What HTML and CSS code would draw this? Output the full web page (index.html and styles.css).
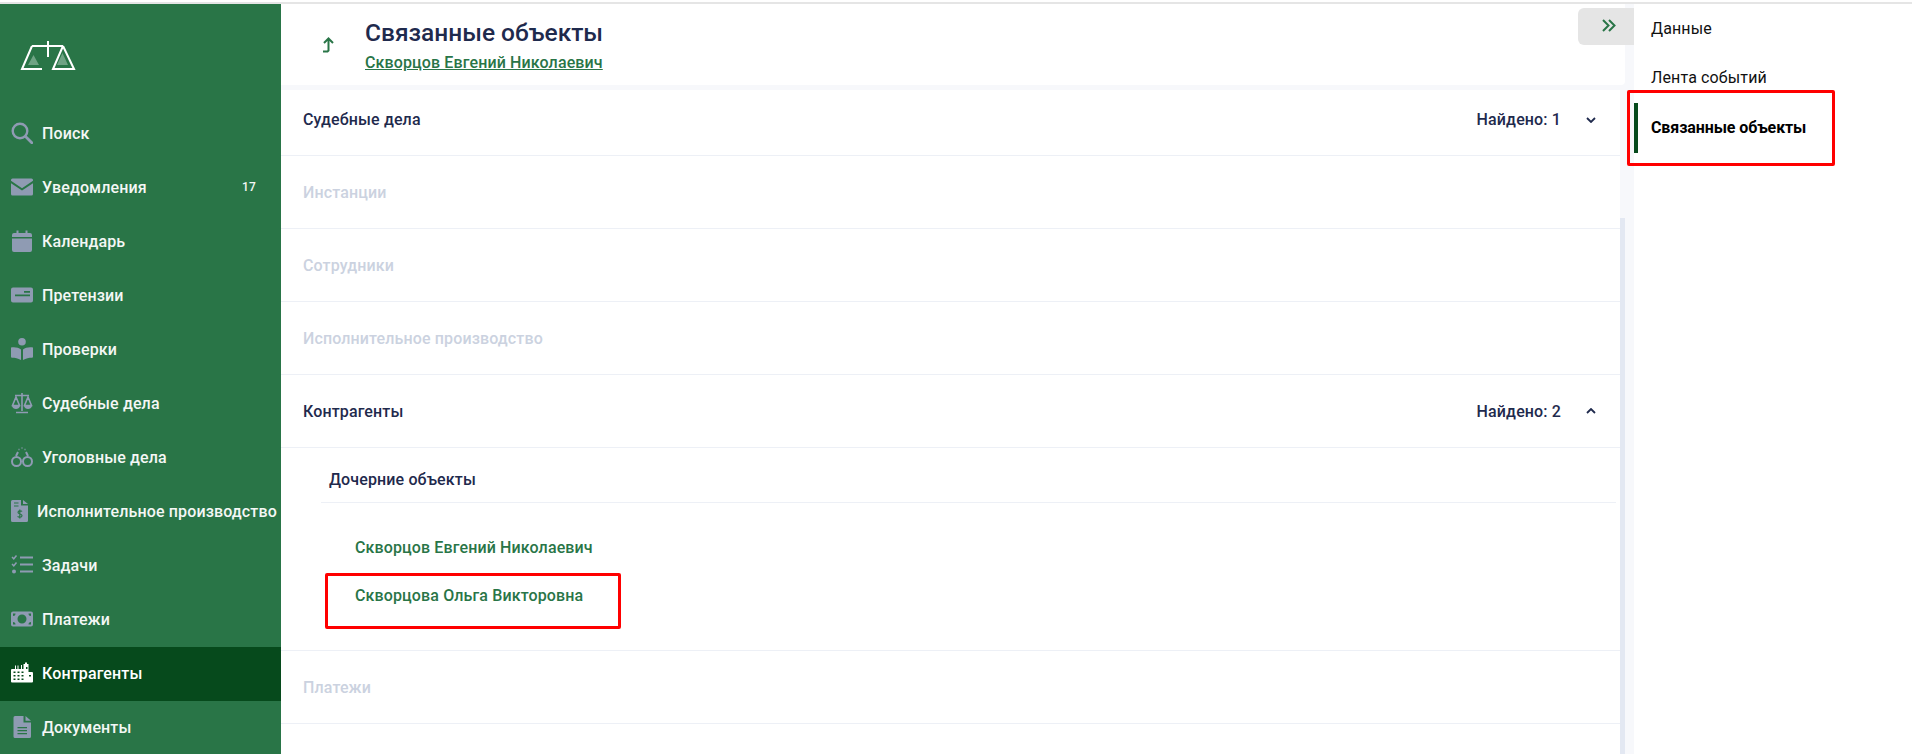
FILE: index.html

```html
<!DOCTYPE html>
<html lang="ru">
<head>
  <meta charset="UTF-8" />
  <title>Связанные объекты</title>
  <link rel="stylesheet" href="styles.css">
</head>
<body>
  <div class="top-line"></div>
  <div class="page">
    <aside class="sidebar">
      <div class="logo">
        <svg width="58" height="32" viewBox="0 0 58 32">
          <path d="M13.500 14 8 24h11zM42.500 12 37 24h11z" fill="#6fa384"/>
          <path d="M28 0v16M12 5h31M22 28H2L12 5M43 5 33 28h21L43 5" fill="none" stroke="#fff" stroke-width="2"/>
        </svg>
      </div>
      <nav>
        <a class="nav-item">
          <svg class="nav-icon" viewBox="0 0 22 22"><circle cx="9" cy="9" r="7.3" fill="none" stroke-width="2.4"/><path d="m14.5 14.5 6.3 6.3" stroke-width="2.8" fill="none" stroke-linecap="round"/></svg>
          <span>Поиск</span>
        </a>
        <a class="nav-item">
          <svg class="nav-icon" viewBox="0 0 22 22"><path d="M1.5 2.5h19A1.5 1.5 0 0 1 22 4v.8l-11 7.4L0 4.800V4a1.500 1.500 0 0 1 1.500-1.500z" class="fill"/><path d="M0 7.200 11 14.600 22 7.200V18a1.500 1.500 0 0 1-1.500 1.500h-19A1.500 1.500 0 0 1 0 18z" class="fill"/></svg>
          <span>Уведомления</span>
          <b class="badge">17</b>
        </a>
        <a class="nav-item">
          <svg class="nav-icon" viewBox="0 0 22 22"><path d="M1 8.500h20V20a2 2 0 0 1-2 2H3a2 2 0 0 1-2-2zM3 3h2.500V.5h2V3h7V.5h2V3H19a2 2 0 0 1 2 2v2H1V5a2 2 0 0 1 2-2z" class="fill"/></svg>
          <span>Календарь</span>
        </a>
        <a class="nav-item">
          <svg class="nav-icon" viewBox="0 0 22 22"><path fill-rule="evenodd" d="M2 3.500h18a2 2 0 0 1 2 2v11a2 2 0 0 1-2 2H2a2 2 0 0 1-2-2v-11a2 2 0 0 1 2-2zM13 7v1.800h6V7zM4 10.500v1.800h15v-1.800z" class="fill"/></svg>
          <span>Претензии</span>
        </a>
        <a class="nav-item">
          <svg class="nav-icon" viewBox="0 0 22 22"><circle cx="11" cy="3.800" r="3.800" class="fill"/><path d="M0 9.500c4-.6 7.500 0 10 2v10.500c-3-1.800-6-2.300-9-2.300a1 1 0 0 1-1-1zM22 9.500c-4-.6-7.500 0-10 2v10.500c3-1.800 6-2.300 9-2.300a1 1 0 0 0 1-1z" class="fill"/></svg>
          <span>Проверки</span>
        </a>
        <a class="nav-item">
          <svg class="nav-icon" viewBox="0 0 22 22"><path d="M11 1v18M4 3.500h14M5 20.500h12M5 5 1.500 13.500h7zM17 5l-3.500 8.500h7z" fill="none" stroke-width="1.600"/><path d="M1 14c.5 2 2 3 4 3s3.500-1 4-3zM13 14c.5 2 2 3 4 3s3.500-1 4-3z" class="fill"/></svg>
          <span>Судебные дела</span>
        </a>
        <a class="nav-item">
          <svg class="nav-icon" viewBox="0 0 22 22"><circle cx="5.500" cy="15.500" r="4.500" fill="none" stroke-width="2"/><circle cx="16.500" cy="15.500" r="4.500" fill="none" stroke-width="2"/><path d="M5 10 7 6M17 10 15 6" fill="none" stroke-width="2"/><path d="M7.500 3.500h1M10.500 2h1M13.500 3.500h1" fill="none" stroke-width="1.600"/></svg>
          <span>Уголовные дела</span>
        </a>
        <a class="nav-item nav-item-narrow">
          <svg class="nav-icon" viewBox="0 0 17 22"><path fill-rule="evenodd" d="M1.500 0H10v5.500h7V20.500a1.500 1.500 0 0 1-1.500 1.500h-14A1.500 1.500 0 0 1 0 20.500v-19A1.500 1.500 0 0 1 1.500 0zM3 2.500v1h4.500v-1zM3 5.500v1h4.500v-1zM12 0l5 4h-5z" class="fill"/><path d="M11 11.500c-.6-.8-3.800-1.200-4 .8-.2 2 4.200 1.400 4 3.400-.2 2-3.600 1.700-4.400.6M8.800 9.500v9" fill="none" stroke="#297547" stroke-width="1.200"/></svg>
          <span>Исполнительное производство</span>
        </a>
        <a class="nav-item">
          <svg class="nav-icon" viewBox="0 0 22 22"><path d="M1 3l1.800 1.800L5.500 1.500M1 10l1.800 1.800 2.700-3.300" fill="none" stroke-width="1.500"/><circle cx="3" cy="17.500" r="2" class="fill"/><path d="M9 3.500h13M9 10.500h13M9 17.500h13" fill="none" stroke-width="2.200"/></svg>
          <span>Задачи</span>
        </a>
        <a class="nav-item">
          <svg class="nav-icon" viewBox="0 0 22 22"><path fill-rule="evenodd" d="M2 3.500h18a2 2 0 0 1 2 2v11a2 2 0 0 1-2 2H2a2 2 0 0 1-2-2v-11a2 2 0 0 1 2-2zM11 6.500a4.500 4.500 0 1 0 0 9 4.500 4.500 0 0 0 0-9zM2 5.500V8a2.500 2.500 0 0 0 2.500-2.500zM20 5.500H17.500A2.500 2.500 0 0 0 20 8zM2 16.500h2.500A2.500 2.500 0 0 0 2 14zM20 16.500V14a2.500 2.500 0 0 0-2.500 2.500z" class="fill"/></svg>
          <span>Платежи</span>
        </a>
        <a class="nav-item active">
          <svg class="nav-icon" viewBox="0 0 22 22"><path fill-rule="evenodd" d="M1 7h3V3.500h1V7h1.500V3.500h1V7H10V3h1V7h1.500V2h1.500V.5h2V2h1.500v8H21a1 1 0 0 1 1 1v8.500a1 1 0 0 1-1 1H1a1 1 0 0 1-1-1V8a1 1 0 0 1 1-1zM2.500 9.500V11h2V9.500zM6.500 9.500V11h2V9.500zM10.500 9.500V11h2V9.500zM2.500 13V14.500h2V13zM6.500 13V14.500h2V13zM10.500 13V14.500h2V13zM2.500 16.500V18h2v-1.500zM6.500 16.500V18h2v-1.500zM10.500 16.500V18h2v-1.500zM15 5v2h1.500V5zM18 13v1.500h2V13z" class="fill"/></svg>
          <span>Контрагенты</span>
        </a>
        <a class="nav-item">
          <svg class="nav-icon" viewBox="0 0 22 22"><path fill-rule="evenodd" d="M4 0h8.500v6.500H20V20.500A1.500 1.500 0 0 1 18.500 22H4a1.500 1.500 0 0 1-1.500-1.500v-19A1.500 1.500 0 0 1 4 0zM6.500 11v1.300h9.500V11zM6.500 14v1.300h9.500V14zM6.500 17v1.300h9.500V17zM14.500 0 20 4.800H14.500z" class="fill"/></svg>
          <span>Документы</span>
        </a>
      </nav>
    </aside>

    <main class="main">
      <header class="head">
        <svg class="back-icon" width="12" height="16" viewBox="0 0 12 16"><path d="M2 6 6.500 1.500 11 6M6.500 2v11.500L5.500 14.500H1" fill="none" stroke="#297547" stroke-width="2"/></svg>
        <div>
          <h1>Связанные объекты</h1>
          <a class="head-link">Скворцов Евгений Николаевич</a>
        </div>
      </header>
      <button class="toggle">
        <svg width="14" height="13" viewBox="0 0 14 13"><path d="M1 1l5.500 5.500L1 12M7 1l5.500 5.500L7 12" fill="none" stroke="#297547" stroke-width="2"/></svg>
      </button>

      <div class="content">
        <div class="list">
          <div class="row row-first">
            <span>Судебные дела</span>
            <span class="found">Найдено: 1</span>
            <svg class="chevron" width="10" height="6" viewBox="0 0 10 6"><path d="m1 1 4 4 4-4" fill="none" stroke="#1f2a4d" stroke-width="1.800"/></svg>
          </div>
          <div class="row row-empty">Инстанции</div>
          <div class="row row-empty">Сотрудники</div>
          <div class="row row-empty">Исполнительное производство</div>
          <div class="row">
            <span>Контрагенты</span>
            <span class="found">Найдено: 2</span>
            <svg class="chevron" width="10" height="6" viewBox="0 0 10 6"><path d="m1 5 4-4 4 4" fill="none" stroke="#1f2a4d" stroke-width="1.800"/></svg>
          </div>
          <div class="children">
            <div class="children-title">Дочерние объекты</div>
            <div class="children-list">
              <a class="child">Скворцов Евгений Николаевич</a>
              <a class="child">Скворцова Ольга Викторовна<i class="mark mark-child"></i></a>
            </div>
          </div>
          <div class="row row-empty">Платежи</div>
        </div>
        <div class="scrollbar"><div class="thumb"></div></div>
      </div>
    </main>

    <aside class="tabs">
      <a class="tab tab-first">Данные</a>
      <a class="tab">Лента событий</a>
      <a class="tab tab-active">Связанные объекты<i class="mark mark-tab"></i></a>
    </aside>
  </div>
</body>
</html>
```

FILE: styles.css

```css
html, body {
  margin: 0;
  padding: 0;
  height: 754px;
  overflow: hidden;
  background: #fff;
  font-family: Roboto, "Noto Sans", sans-serif;
  font-size: 16px;
  font-weight: 500;
  letter-spacing: .13px;
  color: #1f2a4d;
}
.top-line {
  height: 2px;
  margin-top: 2px;
  background: #e5e5e5;
}
.page {
  display: flex;
  height: 750px;
}

/* sidebar */
.sidebar {
  width: 281px;
  flex: none;
  background: #297547;
  color: #f4f7f5;
}
.logo {
  height: 103px;
  padding: 37px 0 0 20px;
  box-sizing: border-box;
}
.nav-item {
  display: flex;
  align-items: center;
  gap: 9px;
  height: 54px;
  padding: 0 0 2px 11px;
  box-sizing: border-box;
  white-space: nowrap;
}
.nav-item.active {
  background: #064a1c;
  color: #fff;
}
.nav-icon {
  width: 22px;
  height: 22px;
  flex: none;
  stroke: #8f9bb3;
}
.nav-icon .fill {
  fill: #8f9bb3;
  stroke: none;
}
.nav-item.active .nav-icon {
  stroke: #fff;
}
.nav-item.active .nav-icon .fill {
  fill: #fff;
}
.nav-item-narrow .nav-icon {
  width: 17px;
}
.badge {
  margin-left: auto;
  padding-right: 25px;
  font-size: 12px;
  font-weight: 500;
}

/* main part */
.main {
  position: relative;
  flex: 1;
  min-width: 0;
  background: #f7f8fb;
}
.head {
  display: flex;
  align-items: center;
  height: 81px;
  margin-right: 9px;
  padding-left: 41px;
  background: #fff;
  border-bottom-right-radius: 4px;
  box-sizing: border-box;
}
.back-icon {
  margin-right: 31px;
  margin-top: 1px;
}
h1 {
  margin: 0 0 6px;
  font-size: 24.5px;
  line-height: 30px;
  font-weight: 500;
  letter-spacing: 0;
}
.head-link {
  display: block;
  color: #297547;
  text-decoration: underline;
  line-height: 18px;
}
.toggle {
  position: absolute;
  top: 4px;
  right: 0;
  width: 56px;
  height: 37px;
  padding: 0 0 0 6px;
  border: none;
  border-radius: 6px 0 0 6px;
  background: #e5e5e5;
}
.content {
  display: flex;
  margin-top: 5px;
  height: 664px;
}
.list {
  flex: 1;
  background: #fff;
}
.row {
  display: flex;
  align-items: center;
  height: 73px;
  padding: 0 24px 0 22px;
  border-bottom: 1px solid #edf0f6;
  box-sizing: border-box;
}
.row-first {
  height: 66px;
  padding-bottom: 6px;
}
.row-empty {
  color: #cbd2e0;
}
.found {
  margin-left: auto;
}
.chevron {
  margin-left: 25px;
}
.children {
  padding-left: 40px;
  border-bottom: 1px solid #edf0f6;
}
.children-title {
  height: 55px;
  padding: 12px 0 0 8px;
  margin-right: 4px;
  line-height: 40px;
  border-bottom: 1px solid #edf0f6;
  box-sizing: border-box;
}
.children-list {
  padding: 21px 0 30px 34px;
}
.child {
  position: relative;
  display: block;
  height: 48px;
  line-height: 48px;
  color: #297547;
}
.scrollbar {
  width: 14px;
  flex: none;
}
.thumb {
  width: 5px;
  height: 540px;
  margin-top: 128px;
  background: #e3e8f2;
}

/* right tabs */
.tabs {
  width: 278px;
  flex: none;
  background: #fff;
  font-weight: 400;
  color: #111;
}
.tab {
  position: relative;
  display: block;
  height: 50px;
  padding-left: 17px;
  line-height: 50px;
}
.tab-first {
  height: 49px;
}
.tab-active {
  font-weight: 700;
  color: #000;
  letter-spacing: -.1px;
  box-shadow: inset 4px 0 0 #064a1c;
}
.mark {
  position: absolute;
  border: 3px solid #f00;
  border-radius: 2px;
  box-sizing: border-box;
}
.mark-child {
  left: -30px;
  top: 1px;
  width: 296px;
  height: 56px;
}
.mark-tab {
  left: -7px;
  top: -13px;
  width: 208px;
  height: 76px;
}
```
